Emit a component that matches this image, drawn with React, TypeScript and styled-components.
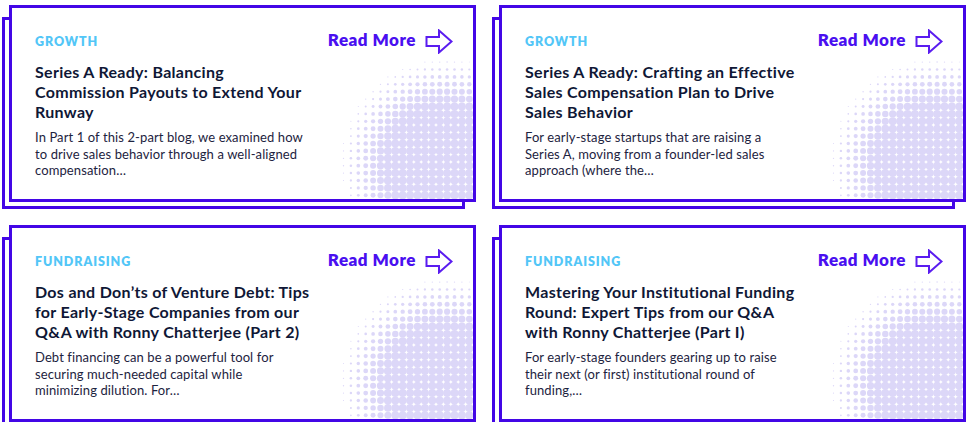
import React from "react";
import styled, { createGlobalStyle } from "styled-components";

const Global = createGlobalStyle`
  html, body { margin: 0; padding: 0; background: #ffffff; }
  body { font-family: Lato, "Open Sans", sans-serif; }
  * { box-sizing: border-box; }
`;

const Grid = styled.div`
  display: grid;
  grid-template-columns: 467px 467px;
  grid-auto-rows: 197px;
  column-gap: 23px;
  row-gap: 23px;
  padding: 5px 0 0 9px;
  width: 969px;
`;

const CardWrap = styled.div`
  position: relative;
  &::before {
    content: "";
    position: absolute;
    left: -7px;
    top: 12px;
    right: 11px;
    bottom: -7px;
    border: 3px solid #4306e6;
    z-index: 0;
  }
`;

const Card = styled.article`
  position: relative;
  z-index: 1;
  height: 100%;
  background: #ffffff;
  border: 3px solid #4306e6;
  overflow: hidden;
  padding: 21px 20px 0 23px;
  display: flex;
  flex-direction: column;
`;

const Header = styled.div`
  position: relative;
  z-index: 1;
  display: flex;
  align-items: center;
  justify-content: space-between;
  height: 24px;
`;

const Category = styled.span`
  font-size: 12.5px;
  font-weight: 800;
  letter-spacing: 0.9px;
  color: #52c6f7;
  text-transform: uppercase;
`;

const ReadMore = styled.a`
  display: flex;
  align-items: center;
  gap: 9px;
  font-size: 17px;
  font-weight: 800;
  letter-spacing: 0.5px;
  color: #4a0ff0;
  text-decoration: none;
`;

const ReadMoreLabel = styled.span`
  line-height: 20px;
  padding-bottom: 3px;
`;

const Title = styled.h3`
  position: relative;
  z-index: 1;
  margin: 9px 0 0 0;
  font-size: 16px;
  line-height: 20px;
  font-weight: 700;
  letter-spacing: 0.3px;
  color: #0f1736;
`;

const Excerpt = styled.p`
  position: relative;
  z-index: 1;
  margin: 7px 0 0 0;
  font-size: 13px;
  line-height: 16.5px;
  font-weight: 400;
  letter-spacing: 0.1px;
  color: #1d2340;
`;

const Line = styled.span`
  display: block;
  white-space: nowrap;
`;

const Halftone = styled.svg`
  position: absolute;
  right: 0;
  bottom: 0;
  z-index: 0;
`;

const Arrow = () => (
  <svg width="28" height="25" viewBox="0 0 28 25" fill="none">
    <path
      d="M1.5 8 H14 V1.5 L26.5 12.5 L14 23.5 V17 H1.5 Z"
      stroke="#5a1cf0"
      strokeWidth="2"
      strokeLinejoin="miter"
    />
  </svg>
);

const SIZE = 150;

const dots = (() => {
  const out: { x: number; y: number; r: number }[] = [];
  const cx = 122;
  const cy = 114;
  const step = 7.4;
  for (let y = SIZE - 3.7; y > 0; y -= step) {
    for (let x = SIZE - 3.7; x > 0; x -= step) {
      const d = Math.hypot(x - cx, y - cy);
      const t = Math.max(0, Math.min(1, (110 - d) / 50));
      const r = 4 * t;
      if (r > 0.45) out.push({ x, y, r });
    }
  }
  return out;
})();

const HalftoneDots = () => (
  <Halftone width={SIZE} height={SIZE} viewBox={`0 0 ${SIZE} ${SIZE}`}>
    {dots.map((d, i) => (
      <circle key={i} cx={d.x} cy={d.y} r={d.r} fill="#dcd7f8" />
    ))}
  </Halftone>
);

const posts = [
  {
    cat: "Growth",
    title: ["Series A Ready: Balancing", "Commission Payouts to Extend Your", "Runway"],
    text: [
      "In Part 1 of this 2-part blog, we examined how",
      "to drive sales behavior through a well-aligned",
      "compensation…",
    ],
  },
  {
    cat: "Growth",
    title: ["Series A Ready: Crafting an Effective", "Sales Compensation Plan to Drive", "Sales Behavior"],
    text: [
      "For early-stage startups that are raising a",
      "Series A, moving from a founder-led sales",
      "approach (where the…",
    ],
  },
  {
    cat: "Fundraising",
    title: [
      "Dos and Don’ts of Venture Debt: Tips",
      "for Early-Stage Companies from our",
      "Q&A with Ronny Chatterjee (Part 2)",
    ],
    text: [
      "Debt financing can be a powerful tool for",
      "securing much-needed capital while",
      "minimizing dilution. For…",
    ],
  },
  {
    cat: "Fundraising",
    title: [
      "Mastering Your Institutional Funding",
      "Round: Expert Tips from our Q&A",
      "with Ronny Chatterjee (Part I)",
    ],
    text: [
      "For early-stage founders gearing up to raise",
      "their next (or first) institutional round of",
      "funding,…",
    ],
  },
];

export default function App() {
  return (
    <>
      <Global />
      <Grid>
        {posts.map((p, i) => (
          <CardWrap key={i}>
            <Card>
              <HalftoneDots />
              <Header>
                <Category>{p.cat}</Category>
                <ReadMore href="#">
                  <ReadMoreLabel>Read More</ReadMoreLabel>
                  <Arrow />
                </ReadMore>
              </Header>
              <Title>
                {p.title.map((l, j) => (
                  <Line key={j}>{l}</Line>
                ))}
              </Title>
              <Excerpt>
                {p.text.map((l, j) => (
                  <Line key={j}>{l}</Line>
                ))}
              </Excerpt>
            </Card>
          </CardWrap>
        ))}
      </Grid>
    </>
  );
}
